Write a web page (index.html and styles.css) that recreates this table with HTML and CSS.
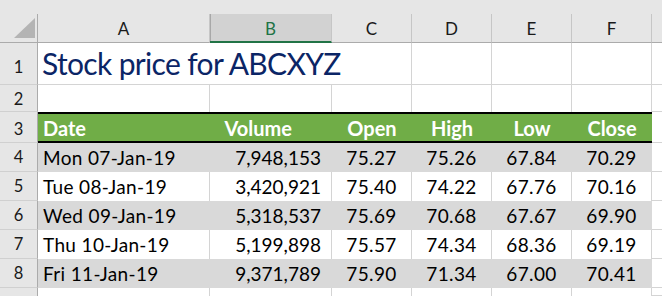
FILE: index.html
```html
<!DOCTYPE html>
<html>
<head>
<meta charset="utf-8">
<link rel="stylesheet" href="styles.css">
</head>
<body>
<div class="sheet">
  <div class="corner"><svg class="tri" width="22" height="21" viewBox="0 0 22 21"><polygon points="21,0 21,20 0,20" fill="#b4b4b4"/></svg></div>
  <div class="ch">A</div>
  <div class="ch sel">B</div>
  <div class="ch">C</div>
  <div class="ch">D</div>
  <div class="ch">E</div>
  <div class="ch">F</div>
  <div class="ch last"></div>

  <div class="rh r1">1</div>
  <div class="c title">Stock price for ABCXYZ</div>
  <div class="c r1b"></div><div class="c r1b"></div><div class="c r1b"></div><div class="c r1b last"></div>

  <div class="rh r2">2</div>
  <div class="c"></div><div class="c"></div><div class="c"></div><div class="c"></div><div class="c"></div><div class="c"></div><div class="c gcol"></div>

  <div class="rh r3">3</div>
  <div class="c hd left">Date</div>
  <div class="c hd vol">Volume</div>
  <div class="c hd">Open</div>
  <div class="c hd">High</div>
  <div class="c hd">Low</div>
  <div class="c hd">Close</div>
  <div class="c gcol"></div>

  <div class="rh dr">4</div>
  <div class="c d g left">Mon 07-Jan-19</div><div class="c d g num">7,948,153</div><div class="c d g">75.27</div><div class="c d g">75.26</div><div class="c d g">67.84</div><div class="c d g">70.29</div><div class="c gcol"></div>

  <div class="rh dr">5</div>
  <div class="c d left">Tue 08-Jan-19</div><div class="c d num">3,420,921</div><div class="c d">75.40</div><div class="c d">74.22</div><div class="c d">67.76</div><div class="c d">70.16</div><div class="c gcol"></div>

  <div class="rh dr">6</div>
  <div class="c d g left">Wed 09-Jan-19</div><div class="c d g num">5,318,537</div><div class="c d g">75.69</div><div class="c d g">70.68</div><div class="c d g">67.67</div><div class="c d g">69.90</div><div class="c gcol"></div>

  <div class="rh dr">7</div>
  <div class="c d left">Thu 10-Jan-19</div><div class="c d num">5,199,898</div><div class="c d">75.57</div><div class="c d">74.34</div><div class="c d">68.36</div><div class="c d">69.19</div><div class="c gcol"></div>

  <div class="rh dr">8</div>
  <div class="c d g left">Fri 11-Jan-19</div><div class="c d g num">9,371,789</div><div class="c d g">75.90</div><div class="c d g">71.34</div><div class="c d g">67.00</div><div class="c d g">70.41</div><div class="c gcol"></div>

  <div class="rh dr end"></div>
  <div class="c d"></div><div class="c d"></div><div class="c d"></div><div class="c d"></div><div class="c d"></div><div class="c d"></div><div class="c gcol"></div>
</div>
</body>
</html>
```

FILE: styles.css
```css
html, body {
  margin: 0;
  padding: 0;
  background: #e6e6e6;
  overflow: hidden;
}

.sheet {
  margin-top: 14px;
  display: grid;
  grid-template-columns: 38px 172px 122px 80px 80px 80px 80px 1fr;
  grid-template-rows: 29px 42px 27px 31px 29px 29px 29px 29px 29px 8px;
  font-family: Lato, "Liberation Sans", sans-serif;
  color: #000;
}

.sheet > div {
  box-sizing: border-box;
}

.corner {
  background: #e6e6e6;
  border-right: 1px solid #ababab;
  border-bottom: 1px solid #ababab;
  position: relative;
}

.tri {
  position: absolute;
  left: 14px;
  top: 4px;
}

.ch {
  background: #e6e6e6;
  border-right: 1px solid #c6c6c6;
  border-bottom: 1px solid #ababab;
  font-size: 17px;
  line-height: 24px;
  padding-top: 3px;
  text-align: center;
  color: #1a1a1a;
}

.ch.sel {
  background: #d2d2d2;
  color: #217346;
  border-bottom: 2px solid #217346;
  box-shadow: inset 1px 0 0 #a8a8a8;
}

.ch.last {
  border-right: none;
}

.rh {
  background: #e6e6e6;
  border-right: 1px solid #ababab;
  border-bottom: 1px solid #d0d0d0;
  font-size: 16.5px;
  color: #1a1a1a;
  text-align: center;
}

.rh.r1 { line-height: 41px; padding-top: 4px; }
.rh.r2 { line-height: 26px; padding-top: 1px; }
.rh.r3 { line-height: 30px; padding-top: 2px; }
.rh.dr { line-height: 28px; }
.rh.end { border-bottom: none; }

.c {
  background: #fff;
  border-right: 1px solid #d4d4d4;
}

.title {
  grid-column: span 3;
  border-bottom: 1px solid #d4d4d4;
  font-size: 30px;
  letter-spacing: -0.65px;
  line-height: 41px;
  padding-left: 4px;
  color: #0b2566;
  white-space: nowrap;
}

.r1b {
  border-bottom: 1px solid #d4d4d4;
}

.c.last, .c.gcol {
  border-right: none;
  border-bottom: 1px solid #d4d4d4;
}

.hd {
  background: #70ad47;
  color: #fff;
  font-weight: bold;
  font-size: 20px;
  border-top: 2px solid #000;
  border-bottom: 2px solid #000;
  border-right: none;
  line-height: 27px;
  padding-top: 1px;
  text-align: center;
}

.hd.vol {
  text-align: right;
  padding-right: 40px;
}

.d {
  font-size: 19px;
  line-height: 29px;
  text-align: center;
  white-space: nowrap;
  letter-spacing: 0.35px;
}

.left {
  text-align: left;
  padding-left: 5px;
}

.num {
  text-align: right;
  padding-right: 10px;
  letter-spacing: 0;
}

.g {
  background: #d9d9d9;
  border-right-color: #d9d9d9;
}
```
